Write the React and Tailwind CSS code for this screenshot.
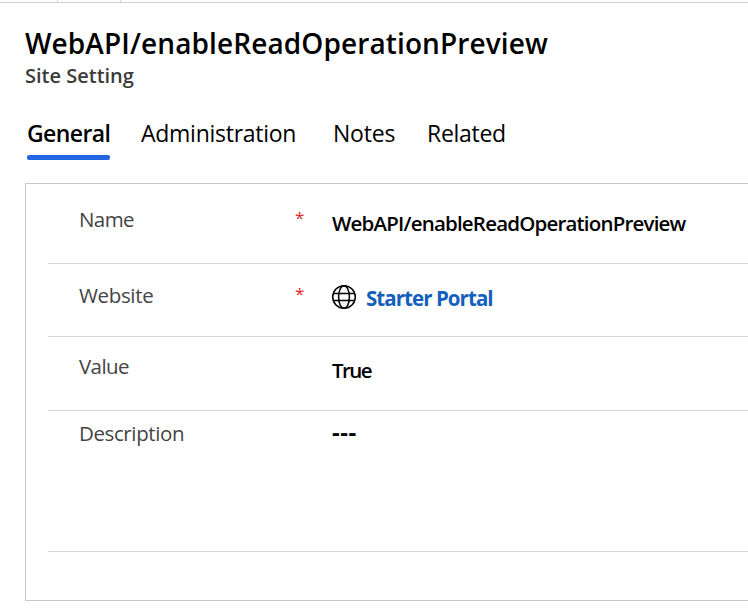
const tabs = [
  { label: "Administration", cls: "w-[192px] tracking-[-0.27px]" },
  { label: "Notes", cls: "w-[94px] tracking-[-0.2px]" },
  { label: "Related", cls: "w-[90px] tracking-[-0.3px]" },
];

function Globe() {
  return (
    <svg className="h-[26px] w-[26px] shrink-0" viewBox="0 0 26 26" fill="none" stroke="#000" strokeWidth="1.5">
      <circle cx="13" cy="13" r="11.3" />
      <ellipse cx="13" cy="13" rx="5.4" ry="11.3" />
      <path d="M2.4 9.5h21.2M2.4 16.5h21.2" />
    </svg>
  );
}

function Row({ label, labelCls, required, height, labelPad, valuePad, children }) {
  return (
    <div className={`flex border-b border-[#d6d6d6] pl-[31px] ${height}`}>
      <div className={`w-[216px] text-[20.5px] leading-7 text-[#444] ${labelCls} ${labelPad}`}>{label}</div>
      <div className={`w-[37px] text-[17px] leading-[26px] text-[#e0262b] ${labelPad}`}>{required ? "*" : ""}</div>
      <div className={`flex whitespace-nowrap text-[20.5px] leading-7 font-semibold text-black ${valuePad}`}>{children}</div>
    </div>
  );
}

export default function App() {
  return (
    <div className="h-[611px] w-[748px] overflow-hidden bg-white font-['Open_Sans',sans-serif]">
      <div className="flex h-[3px] border-b border-[#d2d2d2]">
        <div className="w-[58px] border-r border-[#d2d2d2]" />
        <div className="w-[63px] border-r border-[#d2d2d2]" />
      </div>
      <header className="pt-[22px] pl-[25px] whitespace-nowrap">
        <h1 className="text-[28px] leading-9 font-semibold tracking-[0.11px] text-black">WebAPI/enableReadOperationPreview</h1>
        <p className="pt-px text-[20px] leading-7 font-semibold text-[#3b3b3b]">Site Setting</p>
      </header>
      <nav className="mt-[27px] flex h-[66px] pl-[27px] text-[23px] leading-8 whitespace-nowrap text-black">
        <div className="w-[114px] font-semibold">
          <span className="tracking-[-0.6px]">General</span>
          <div className="mt-[6px] h-[5px] w-[83px] rounded-[2px] bg-[#2266e3]" />
        </div>
        {tabs.map((t) => (
          <div key={t.label} className={t.cls}>{t.label}</div>
        ))}
      </nav>
      <section className="ml-[25px] h-[418px] border-y border-l border-[#c8c8c8] pl-[22px]">
        <Row label="Name" labelCls="tracking-[-0.6px]" required height="h-[80px]" labelPad="pt-[21px]" valuePad="pt-[25px]">
          <span className="tracking-[-0.81px]">WebAPI/enableReadOperationPreview</span>
        </Row>
        <Row label="Website" labelCls="tracking-[-0.35px]" required height="h-[73px]" labelPad="pt-[17px]" valuePad="pt-[20px]">
          <div className="-ml-px">
            <Globe />
          </div>
          <span className="ml-[9px] font-bold tracking-[-0.95px] text-[#1560bd]">Starter Portal</span>
        </Row>
        <Row label="Value" labelCls="tracking-[-0.6px]" height="h-[74px]" labelPad="pt-[15px]" valuePad="pt-[19px]">
          <span className="tracking-[-1.6px]">True</span>
        </Row>
        <Row label="Description" labelCls="tracking-[-0.4px]" height="h-[141px]" labelPad="pt-[8px]" valuePad="pt-[7px]">
          <span className="text-[24px] font-bold tracking-[0.5px]">---</span>
        </Row>
      </section>
    </div>
  );
}
